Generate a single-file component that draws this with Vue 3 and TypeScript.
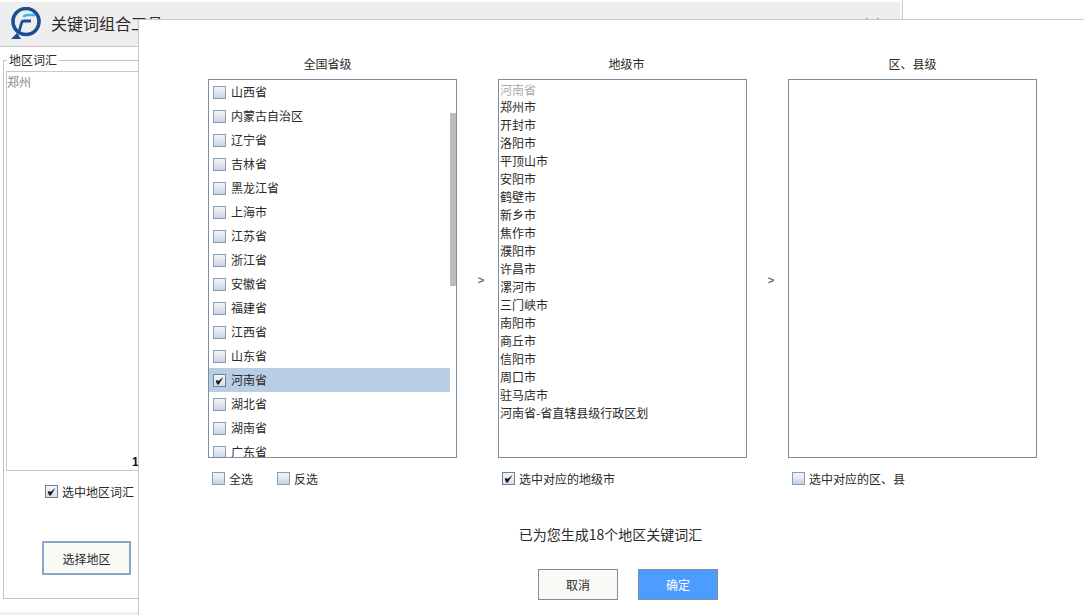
<script setup lang="ts">
const provinces: { name: string; checked: boolean }[] = [
  '山西省', '内蒙古自治区', '辽宁省', '吉林省', '黑龙江省', '上海市', '江苏省', '浙江省',
  '安徽省', '福建省', '江西省', '山东省', '河南省', '湖北省', '湖南省', '广东省',
].map((name) => ({ name, checked: name === '河南省' }))

const cities: string[] = [
  '郑州市', '开封市', '洛阳市', '平顶山市', '安阳市', '鹤壁市', '新乡市', '焦作市', '濮阳市',
  '许昌市', '漯河市', '三门峡市', '南阳市', '商丘市', '信阳市', '周口市', '驻马店市', '河南省-省直辖县级行政区划',
]

const checkPath = 'M2.6 6.4 L5.2 6.2 L5.6 7 L10.6 2.8 L5.8 10.6 L4.2 10.6 Z'
</script>

<template>
  <div class="page">
    <div class="window">
      <header class="titlebar">
        <svg class="logo" viewBox="0 0 32 32" width="32" height="32" aria-hidden="true">
          <circle cx="16" cy="14.5" r="13" fill="none" stroke="#1b4f94" stroke-width="3.6" />
          <path d="M1 32 H11 L7 26 Z" fill="#1b4f94" />
          <path d="M13.5 10 Q14.5 8 18 8 H25" fill="none" stroke="#44b4ee" stroke-width="2.6" />
          <path d="M9 25 L11.5 16 Q12 14 14 14 H21" fill="none" stroke="#1b4f94" stroke-width="2.8" />
        </svg>
        <span class="app-title">关键词组合工具</span>
        <svg class="close" viewBox="0 0 13 13" width="13" height="13" aria-hidden="true">
          <path d="M.5 .5 L12.5 12.5 M12.5 .5 L.5 12.5" fill="none" stroke="#555" stroke-width="1.4" />
        </svg>
      </header>
      <fieldset class="group">
        <legend>地区词汇</legend>
        <div class="textarea"><span class="place">郑州</span><b class="count">1</b></div>
        <label class="bg-check"><span class="box on"><svg viewBox="0 0 13 13" width="13" height="13"><path :d="checkPath" fill="#1a1a1a" /></svg></span>选中地区词汇</label>
        <button class="pick">选择地区</button>
      </fieldset>
      <div class="statusbar"></div>
    </div>

    <section class="dialog">
      <div class="columns">
        <div class="column">
          <h3 class="title-first">全国省级</h3>
          <div class="list list-scroll">
            <ul class="rows">
              <li v-for="p in provinces" :key="p.name" class="row" :class="{ selected: p.checked }">
                <span class="box" :class="{ on: p.checked }"><svg v-if="p.checked" viewBox="0 0 13 13" width="13" height="13"><path :d="checkPath" fill="#1a1a1a" /></svg></span>
                <span class="row-text">{{ p.name }}</span>
              </li>
            </ul>
            <div class="scrollbar"><div class="thumb"></div></div>
          </div>
          <div class="options">
            <label class="opt"><span class="box"></span>全选</label>
            <label class="opt"><span class="box"></span>反选</label>
          </div>
        </div>
        <div class="arrow">&gt;</div>
        <div class="column">
          <h3 class="title-second">地级市</h3>
          <div class="list">
            <ul class="cities">
              <li class="muted">河南省</li>
              <li v-for="c in cities" :key="c">{{ c }}</li>
            </ul>
          </div>
          <div class="options">
            <label class="opt"><span class="box on"><svg viewBox="0 0 13 13" width="13" height="13"><path :d="checkPath" fill="#1a1a1a" /></svg></span>选中对应的地级市</label>
          </div>
        </div>
        <div class="arrow">&gt;</div>
        <div class="column">
          <h3>区、县级</h3>
          <div class="list"></div>
          <div class="options">
            <label class="opt"><span class="box"></span>选中对应的区、县</label>
          </div>
        </div>
      </div>
      <p class="message">已为您生成18个地区关键词汇</p>
      <div class="actions">
        <button class="btn">取消</button>
        <button class="btn primary">确定</button>
      </div>
    </section>
  </div>
</template>

<style scoped>
.page {
  position: relative;
  width: 1084px;
  height: 615px;
  overflow: hidden;
  background: #fff;
  font-family: "Noto Sans CJK SC", "Liberation Sans", sans-serif;
  font-size: 12px;
  color: #2a2a2a;
}
.window {
  width: 903px;
  height: 615px;
  box-sizing: border-box;
  padding-top: 2px;
  border-right: 1px solid #c8c8c8;
  display: flex;
  flex-direction: column;
}
.titlebar {
  height: 45px;
  width: 900px;
  flex: none;
  box-sizing: border-box;
  background: #eeeeee;
  border-bottom: 1px solid #c8c8c8;
  display: flex;
  align-items: center;
  padding-left: 10px;
}
.logo { flex: none; margin: 0 9px 2px 0; }
.app-title { font-size: 16px; color: #2a2a2a; flex: 1; margin-bottom: 2px; }
.close { flex: none; margin-right: 21px; }
.group {
  margin: 6px 0 0 3px;
  width: 890px;
  height: 546px;
  flex: none;
  box-sizing: border-box;
  border: 1px solid #c4c4c4;
  padding: 4px 0 0 2px;
  min-width: 0;
}
.group legend { padding: 0 2px; margin-left: 1px; line-height: 14px; }
.textarea {
  position: relative;
  width: 880px;
  height: 400px;
  box-sizing: border-box;
  border: 1px solid #c8c8c8;
  padding: 2px 0;
  color: #888;
  line-height: 16px;
}
.count {
  position: absolute;
  left: 125px;
  bottom: 0;
  color: #111;
  font-family: "Liberation Sans", sans-serif;
}
.bg-check {
  display: flex;
  align-items: center;
  gap: 4px;
  margin: 13px 0 0 39px;
  height: 14px;
}
.pick {
  display: block;
  margin: 43px 0 0 36px;
  width: 89px;
  height: 34px;
  border: 2px solid #8ba6c8;
  background: #f9f9f6;
  font: inherit;
  color: #2a2a2a;
  padding: 0;
}
.statusbar { margin-top: 13px; height: 4px; background: #f0f0f0; width: 900px; }

.dialog {
  position: absolute;
  left: 138px;
  top: 19px;
  right: 0;
  bottom: 0;
  box-sizing: border-box;
  background: #fff;
  border-left: 1px solid #c8c8c8;
  border-top: 1px solid #c8c8c8;
  padding: 36px 0 0 69px;
}
.columns {
  display: grid;
  grid-template-columns: 249px 41px 249px 41px 249px;
}
.column { display: flex; flex-direction: column; }
.column h3 {
  margin: 0 0 7px;
  font-size: 12px;
  font-weight: 400;
  line-height: 16px;
  text-align: center;
}
.column .title-first { padding-right: 10px; }
.column .title-second { padding-left: 8px; }
.list {
  height: 379px;
  box-sizing: border-box;
  border: 1px solid #7d8ea3;
  overflow: hidden;
}
.list-scroll { display: flex; }
.rows { list-style: none; margin: 0; padding: 0; flex: 1; min-width: 0; }
.row {
  height: 24px;
  display: flex;
  align-items: center;
  gap: 5px;
  padding-left: 4px;
}
.row-text { line-height: 22px; margin-bottom: 1px; }
.row.selected { background: #b8cee4; }
.scrollbar { width: 6px; flex: none; }
.thumb { margin-top: 33px; height: 173px; background: #bcbcbc; }
.box {
  width: 13px;
  height: 13px;
  flex: none;
  box-sizing: border-box;
  border: 1px solid #8c9db1;
  background: linear-gradient(180deg, #f2f5f9 0%, #dfe8f2 50%, #c3d2e4 100%);
  display: inline-flex;
  overflow: hidden;
}
.box svg { margin: -1px; flex: none; }
.box.on { background: linear-gradient(180deg, #f4f7fa, #d5e0ec); border-color: #6f8095; }
.options {
  display: flex;
  gap: 24px;
  margin-top: 13px;
  padding-left: 4px;
  height: 14px;
}
.opt { display: flex; align-items: center; gap: 4px; }
.arrow {
  display: flex;
  align-items: center;
  justify-content: center;
  padding: 40px 0 0 7px;
  height: 367px;
  color: #666;
  font-size: 11px;
  font-weight: 700;
  font-family: "Liberation Sans", sans-serif;
}
.cities { list-style: none; margin: 0; padding: 0 0 0 1px; }
.cities li { height: 18px; line-height: 18px; }
.cities .muted { color: #aaa; padding-top: 1px; height: 17px; }
.message {
  margin: 39px 0 0;
  width: 805px;
  text-align: center;
  font-size: 14px;
  line-height: 20px;
}
.actions {
  display: flex;
  gap: 20px;
  margin: 25px 0 0 330px;
}
.btn {
  width: 80px;
  height: 31px;
  box-sizing: border-box;
  border: 1px solid #7d8ea3;
  background: #f9f9f6;
  font: inherit;
  color: #2a2a2a;
  padding: 0;
}
.btn.primary { background: #4d9cff; color: #fff; }
</style>
